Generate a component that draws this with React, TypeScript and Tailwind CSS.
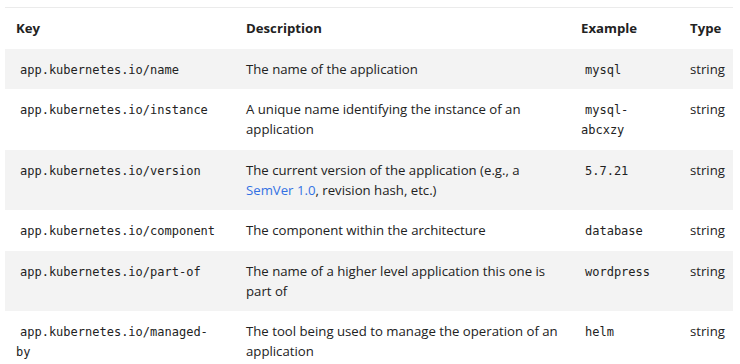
import React from "react";

const rows: { key: string; desc: React.ReactNode; ex: string }[] = [
  { key: "app.kubernetes.io/name", desc: "The name of the application", ex: "mysql" },
  {
    key: "app.kubernetes.io/instance",
    desc: "A unique name identifying the instance of an application",
    ex: "mysql-abcxzy",
  },
  {
    key: "app.kubernetes.io/version",
    desc: (
      <>
        The current version of the application (e.g., a{" "}
        <a className="text-[#3371e3]" href="#">
          SemVer 1.0
        </a>
        , revision hash, etc.)
      </>
    ),
    ex: "5.7.21",
  },
  { key: "app.kubernetes.io/component", desc: "The component within the architecture", ex: "database" },
  {
    key: "app.kubernetes.io/part-of",
    desc: "The name of a higher level application this one is part of",
    ex: "wordpress",
  },
  {
    key: "app.kubernetes.io/managed-by",
    desc: "The tool being used to manage the operation of an application",
    ex: "helm",
  },
];

function Code({ children }: { children: React.ReactNode }) {
  return (
    <code className="px-1 text-[12px] leading-none text-[#222] [font-family:'DejaVu_Sans_Mono',monospace]">
      {children}
    </code>
  );
}

export default function App() {
  return (
    <div className="w-[740px] h-[364px] overflow-hidden bg-white pt-[7px] pl-[5px] [font-family:'Open_Sans',sans-serif] text-[13.2px] leading-[20px] text-[#222]">
      <table className="w-[728px] table-fixed border-collapse border-t border-[#ebebeb]">
        <colgroup>
          <col className="w-[230px]" />
          <col className="w-[335px]" />
          <col className="w-[109px]" />
          <col className="w-[54px]" />
        </colgroup>
        <thead>
          <tr>
            <th className="px-[11px] pt-[10px] pb-[10.5px] text-left font-bold">Key</th>
            <th className="px-[11px] pt-[10px] pb-[10.5px] text-left font-bold">Description</th>
            <th className="px-[11px] pt-[10px] pb-[10.5px] text-left font-bold">Example</th>
            <th className="pl-[11px] pt-[10px] pb-[10.5px] text-left font-bold">Type</th>
          </tr>
        </thead>
        <tbody>
          {rows.map((r, i) => (
            <tr key={r.key} className={i % 2 === 0 ? "bg-[#f3f3f3]" : "bg-white"}>
              <td className="px-[11px] pt-[10px] pb-[10.5px] align-top">
                <Code>{r.key}</Code>
              </td>
              <td className="px-[11px] pt-[10px] pb-[10.5px] align-top">{r.desc}</td>
              <td className="px-[11px] pt-[10px] pb-[10.5px] align-top">
                <Code>{r.ex}</Code>
              </td>
              <td className="pl-[11px] pt-[10px] pb-[10.5px] align-top">string</td>
            </tr>
          ))}
        </tbody>
      </table>
    </div>
  );
}
